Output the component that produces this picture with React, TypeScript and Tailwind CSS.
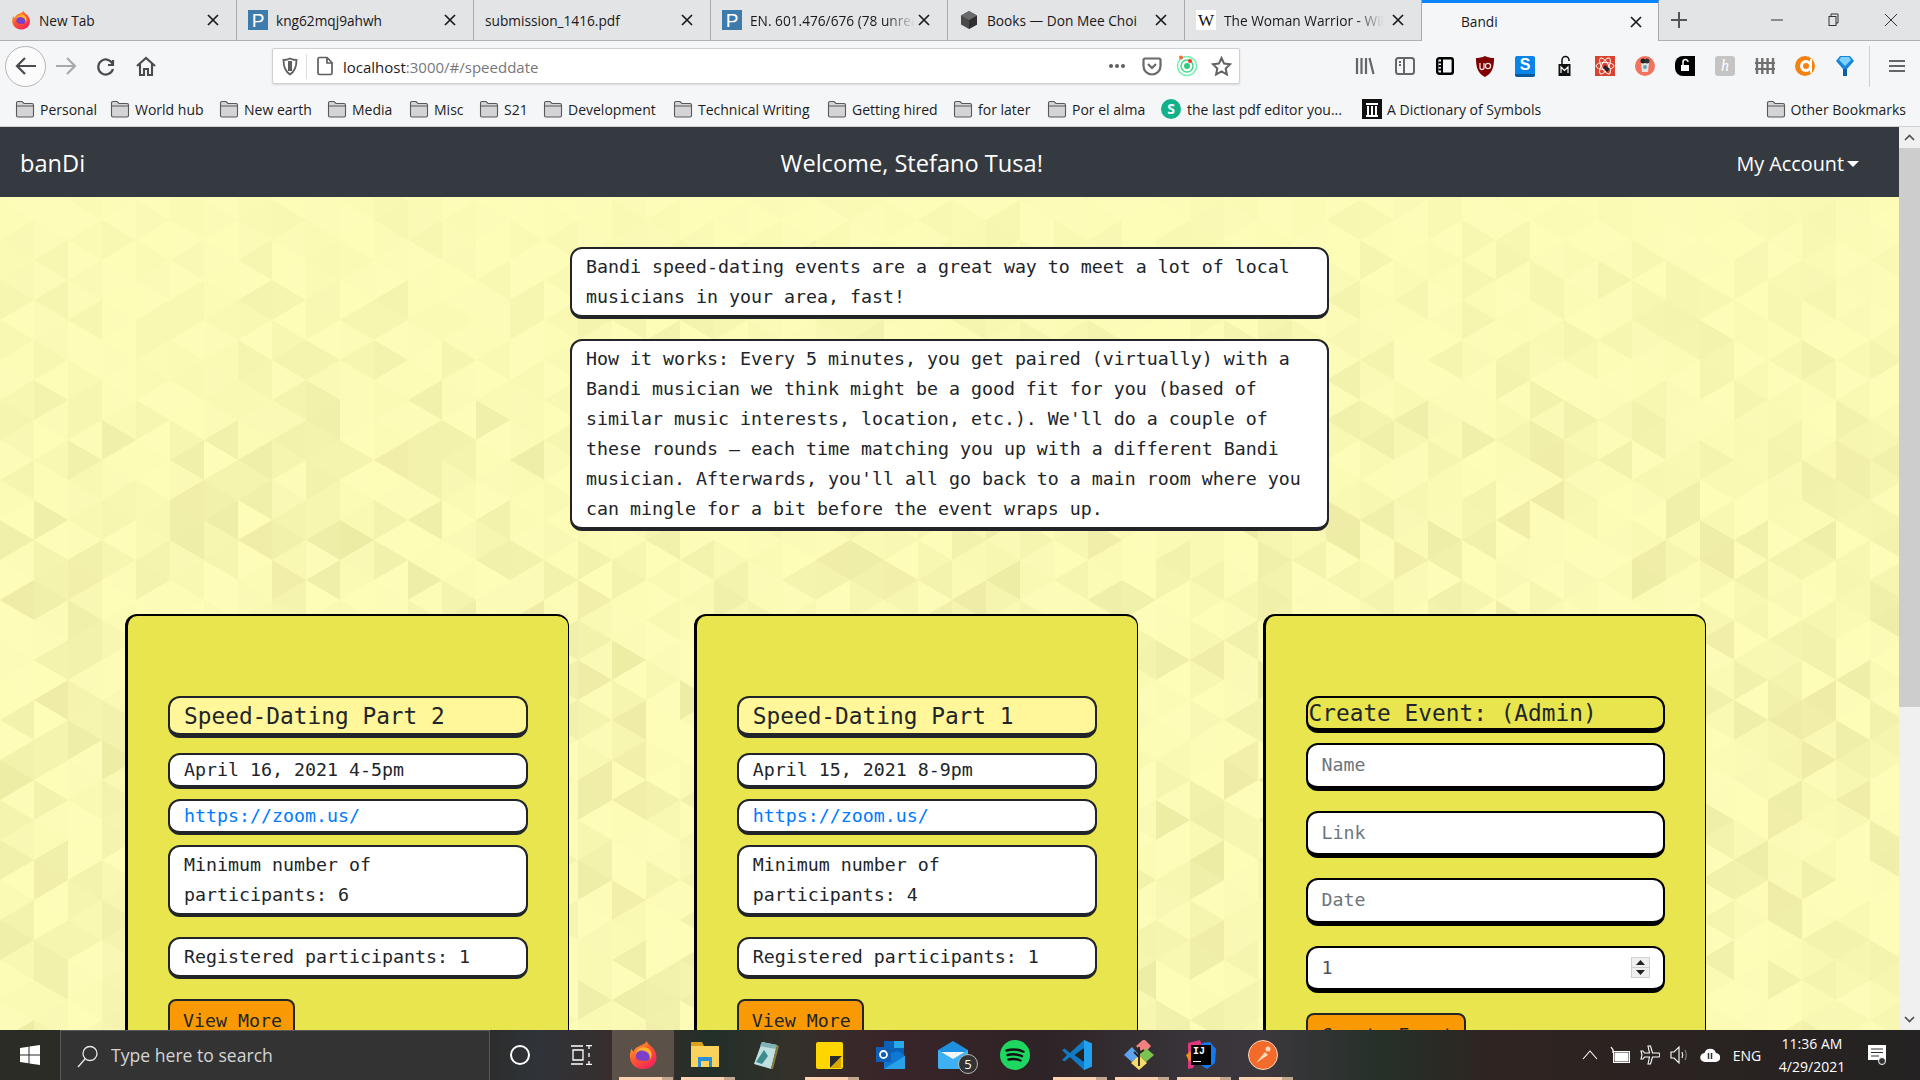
import React from "react";

const ui = "font-['Open_Sans',sans-serif]";
const mono = "font-['DejaVu_Sans_Mono',monospace]";

function CloseX({ className = "text-[#1b1b1b]" }: { className?: string }) {
  return (
    <svg width="14" height="14" viewBox="0 0 14 14" className={className}>
      <path d="M2 2l10 10M12 2L2 12" stroke="currentColor" strokeWidth="1.7" fill="none" />
    </svg>
  );
}

function FirefoxIcon({ size = 20 }: { size?: number }) {
  return (
    <svg width={size} height={size} viewBox="0 0 32 32">
      <defs>
        <linearGradient id="ffa" x1="0" y1="0" x2="0.7" y2="1">
          <stop offset="0" stopColor="#ffbd2e" />
          <stop offset="0.5" stopColor="#ff5a2c" />
          <stop offset="1" stopColor="#f5245f" />
        </linearGradient>
      </defs>
      <path d="M20 1c1 4 5 5 7 8 3 4 4 8 3 12-1 6-7 10-14 10C8 31 2 25 2 17c0-3 1-6 2-8 0 2 1 3 2 3 1-3 4-5 7-6 3-1 6-3 7-5z" fill="url(#ffa)" />
      <circle cx="16" cy="17" r="7.5" fill="#7b3fc9" />
      <path d="M8 15c2-3 6-5 10-3 4 1 6 5 5 9 3-3 3-8 0-11-3-3-8-3-11-1-2 1-3 3-4 6z" fill="#ffb02e" />
      <path d="M9 20c2 4 7 6 11 4 2-1 3-2 4-4-2 2-5 3-8 2-3 0-5-1-7-2z" fill="#ff4a2e" />
    </svg>
  );
}

function PiazzaIcon() {
  return (
    <div className="w-[20px] h-[20px] bg-[#3e7bad] flex items-center justify-center text-white text-[19px] leading-none font-['Liberation_Sans',sans-serif]">
      P
    </div>
  );
}

function BoxIcon() {
  return (
    <svg width="20" height="20" viewBox="0 0 20 20">
      <path d="M10 1l8 4.5v9L10 19l-8-4.5v-9z" fill="#4a4a4a" />
      <path d="M10 10l8-4.5v9L10 19z" fill="#2f2f2f" />
      <path d="M10 1l8 4.5L10 10 2 5.5z" fill="#6a6a6a" />
    </svg>
  );
}

function WikiIcon() {
  return (
    <div className="w-[20px] h-[20px] bg-white flex items-center justify-center text-[#111] text-[17px] leading-none font-['Liberation_Serif',serif]">
      W
    </div>
  );
}

function Folder() {
  return (
    <svg width="20" height="18" viewBox="0 0 20 18" className="shrink-0">
      <path d="M1.5 15.5V3a1.5 1.5 0 0 1 1.5-1.5h4l2 2h8A1.5 1.5 0 0 1 18.5 5v10.5A1.5 1.5 0 0 1 17 17H3a1.5 1.5 0 0 1-1.5-1.5z" fill="#d4d4d6" stroke="#58585a" strokeWidth="1.1" />
      <path d="M1.5 6h17" stroke="#58585a" strokeWidth="1" />
    </svg>
  );
}

const tabs = [
  { title: "New Tab", icon: <FirefoxIcon />, fade: "" },
  { title: "kng62mqj9ahwh", icon: <PiazzaIcon />, fade: "" },
  { title: "submission_1416.pdf", icon: null, fade: "" },
  { title: "EN. 601.476/676 (78 unread)", icon: <PiazzaIcon />, fade: "[mask-image:linear-gradient(90deg,#000_82%,transparent)]" },
  { title: "Books — Don Mee Choi", icon: <BoxIcon />, fade: "" },
  { title: "The Woman Warrior - Wikipedia", icon: <WikiIcon />, fade: "[mask-image:linear-gradient(90deg,#000_80%,transparent_97%)]" },
];

function TabStrip() {
  return (
    <div className={`flex h-[41px] bg-[#e3e4e6] border-b border-[#b1b1b3] text-[13.7px] text-[#18181a] ${ui}`}>
      {tabs.map((t) => (
        <div key={t.title} className="w-[237px] h-[40px] flex items-center pl-[11px] pr-[16px] border-r border-[#a9a9ab]">
          {t.icon && <div className="w-[20px] mr-[8px] shrink-0">{t.icon}</div>}
          <div className={`flex-1 min-w-0 pt-[2px] overflow-hidden whitespace-nowrap ${t.fade}`}>
            {t.title}
          </div>
          <div className="ml-auto pl-[2px]">
            <CloseX />
          </div>
        </div>
      ))}
      <div className="w-[237px] h-[41px] flex items-center pl-[39px] pr-[15px] bg-[#f5f6f7] border-t-[3px] border-[#0a84ff] border-r border-r-[#a9a9ab]">
        <div className="flex-1">Bandi</div>
        <CloseX />
      </div>
      <div className="w-[40px] flex items-center justify-center">
        <svg width="18" height="18" viewBox="0 0 18 18">
          <path d="M9 1v16M1 9h16" stroke="#555" strokeWidth="2" />
        </svg>
      </div>
      <div className="flex-1" />
      <div className="w-[56px] flex items-center justify-center">
        <svg width="12" height="12" viewBox="0 0 12 12"><path d="M0 6h12" stroke="#333" /></svg>
      </div>
      <div className="w-[58px] flex items-center justify-center">
        <svg width="12" height="14" viewBox="0 0 12 14" fill="none" stroke="#333"><path d="M3 3V1h7v9H8" /><rect x="1" y="3.5" width="7" height="9" /></svg>
      </div>
      <div className="w-[56px] flex items-center justify-center mr-[1px]">
        <svg width="14" height="14" viewBox="0 0 14 14"><path d="M1 1l12 12M13 1L1 13" stroke="#333" strokeWidth="1" /></svg>
      </div>
    </div>
  );
}

function NavBtn({ children }: { children: React.ReactNode }) {
  return <div className="w-[40px] h-[40px] flex items-center justify-center">{children}</div>;
}

function ExtSlot({ children }: { children: React.ReactNode }) {
  return <div className="w-[40px] flex items-center justify-center">{children}</div>;
}

function NavRow() {
  return (
    <div className={`flex items-center h-[50px] bg-[#f5f6f7] ${ui}`}>
      <div className="ml-[5px] w-[41px] h-[41px] rounded-full border border-[#b5b5b7] bg-[#fbfbfc] flex items-center justify-center">
        <svg width="22" height="20" viewBox="0 0 22 20" fill="none" stroke="#4a4a4f" strokeWidth="2.2">
          <path d="M21 10H3M10 2l-8 8 8 8" />
        </svg>
      </div>
      <NavBtn>
        <svg width="22" height="20" viewBox="0 0 22 20" fill="none" stroke="#a9a9ab" strokeWidth="2.2">
          <path d="M1 10h18M12 2l8 8-8 8" />
        </svg>
      </NavBtn>
      <NavBtn>
        <svg width="20" height="20" viewBox="0 0 20 20" fill="none" stroke="#4a4a4f" strokeWidth="2.2">
          <path d="M17 4v5h-5M17 9a7.5 7.5 0 1 0 0 4" />
        </svg>
      </NavBtn>
      <NavBtn>
        <svg width="22" height="22" viewBox="0 0 22 22" fill="none" stroke="#4a4a4f" strokeWidth="2.1">
          <path d="M2 11l9-8 9 8M5 9v11h4v-6h4v6h4V9" />
        </svg>
      </NavBtn>
      <div className="ml-[106px] w-[968px] h-[36px] bg-white rounded-[2px] border border-[#d0d0d2] shadow-[0_1px_2px_rgba(0,0,0,0.12)] flex items-center">
        <div className="w-[34px] h-[25px] flex items-center justify-center border-r border-[#dcdcde]">
          <svg width="16" height="19" viewBox="0 0 16 19" fill="none" stroke="#5f5f62" strokeWidth="1.8">
            <path d="M8 1.5c2 1 4 1.5 6.5 1.5 0 6-1 11-6.500 14.500C2.500 14 1.500 9 1.500 3 4 3 6 2.500 8 1.500z" />
            <path d="M8 4v10" strokeWidth="4" />
          </svg>
        </div>
        <div className="w-[36px] flex items-center justify-center">
          <svg width="18" height="20" viewBox="0 0 18 20" fill="none" stroke="#5f5f62" strokeWidth="1.700">
            <path d="M3 1.500h8l5 5V17a1.500 1.500 0 0 1-1.500 1.500h-11A1.500 1.500 0 0 1 2 17V3a1.500 1.500 0 0 1 1-1.500zM11 1.500V7h5" />
          </svg>
        </div>
        <div className="pt-[2px] text-[15px] text-[#1c1c1e] whitespace-nowrap">
          localhost<span className="text-[#77777a]">:3000/#/speeddate</span>
        </div>
        <div className="flex-1" />
        <div className="w-[35px] flex items-center justify-center gap-[2px]">
          <div className="w-[4px] h-[4px] rounded-full bg-[#5f5f62]" />
          <div className="w-[4px] h-[4px] rounded-full bg-[#5f5f62]" />
          <div className="w-[4px] h-[4px] rounded-full bg-[#5f5f62]" />
        </div>
        <div className="w-[35px] flex justify-center">
          <svg width="20" height="19" viewBox="0 0 20 19" fill="none" stroke="#69696c" strokeWidth="2.200">
            <path d="M3 1.500h14A1.500 1.500 0 0 1 18.500 3v6a8.500 8.500 0 0 1-17 0V3A1.500 1.500 0 0 1 3 1.500zM6 7l4 4 4-4" />
          </svg>
        </div>
        <div className="w-[35px] flex justify-center">
          <svg width="22" height="22" viewBox="0 0 22 22" fill="none">
            <circle cx="11" cy="11" r="9.500" stroke="#6ff0b0" strokeWidth="1.500" />
            <circle cx="11" cy="11" r="6" stroke="#45d88a" strokeWidth="1.500" />
            <circle cx="11" cy="11" r="3" fill="#36c77c" />
            <circle cx="5" cy="2.500" r="2" fill="#f26a2e" />
            <circle cx="14" cy="6" r="2" fill="#ee3d24" />
          </svg>
        </div>
        <div className="w-[35px] flex justify-center">
          <svg width="21" height="20" viewBox="0 0 21 20" fill="none" stroke="#626265" strokeWidth="2">
            <path d="M10.500 2l2.600 5.600 6 .7-4.400 4.200 1.200 6-5.400-3-5.400 3 1.200-6L1.900 8.300l6-.7z" />
          </svg>
        </div>
      </div>
      <div className="ml-[105px] flex items-center h-full">
        <ExtSlot>
          <svg width="20" height="18" viewBox="0 0 20 18" stroke="#66666a" strokeWidth="2.200" fill="none">
            <path d="M2 1v16M6.500 1v16M11 1v16M14.500 1l4 16" />
          </svg>
        </ExtSlot>
        <ExtSlot>
          <svg width="20" height="18" viewBox="0 0 20 18" stroke="#66666a" strokeWidth="2" fill="none">
            <rect x="1" y="1" width="18" height="16" rx="2.500" />
            <path d="M9 1v16M4 5h2M4 8h2" />
          </svg>
        </ExtSlot>
        <ExtSlot>
          <svg width="18" height="18" viewBox="0 0 18 18" stroke="#000" strokeWidth="2.400" fill="none">
            <rect x="1.200" y="1.200" width="15.600" height="15.600" rx="2" />
            <path d="M6 1v16M2.500 5.500H6M2.500 9H6M2.500 12.500H6" strokeWidth="2" />
          </svg>
        </ExtSlot>
        <ExtSlot>
          <div className="relative w-[18px] h-[21px]">
            <svg width="18" height="21" viewBox="0 0 18 21" className="absolute inset-0">
              <path d="M9 0c3 1.500 6 2 9 2 0 8-1 15-9 19C1 17 0 10 0 2c3 0 6-.5 9-2z" fill="#800000" />
              <path d="M4 7v4.500a2 2 0 0 0 4 0V7" stroke="#e8dcdc" strokeWidth="1.300" fill="none" />
              <circle cx="12" cy="10" r="2.600" stroke="#e8dcdc" strokeWidth="1.300" fill="none" />
            </svg>
          </div>
        </ExtSlot>
        <ExtSlot>
          <div className="w-[20px] h-[21px] bg-[#0b84e8] border-b-[3px] border-[#0a5aa0] rounded-[2px] flex items-center justify-center text-white text-[16px] leading-none font-bold font-['Liberation_Sans',sans-serif]">
            S
          </div>
        </ExtSlot>
        <ExtSlot>
          <svg width="14" height="22" viewBox="0 0 14 22">
            <path d="M4 10V5a3.500 3.500 0 0 1 7 0v1" stroke="#111" strokeWidth="1.500" fill="none" />
            <rect x="0.500" y="9" width="12" height="12" fill="#111" />
            <path d="M3 18v-6l3.500 3.500L10 12v6" stroke="#fff" strokeWidth="1.200" fill="none" />
          </svg>
        </ExtSlot>
        <ExtSlot>
          <svg width="20" height="20" viewBox="0 0 20 20">
            <rect width="20" height="20" fill="#d9432f" />
            <g fill="none" stroke="#fff" strokeWidth="0.900">
              <ellipse cx="10" cy="10" rx="9" ry="3.500" />
              <ellipse cx="10" cy="10" rx="9" ry="3.500" transform="rotate(60 10 10)" />
              <ellipse cx="10" cy="10" rx="9" ry="3.500" transform="rotate(120 10 10)" />
            </g>
            <path d="M10 9l5 4-3 3-4-4z" fill="#222" />
          </svg>
        </ExtSlot>
        <ExtSlot>
          <svg width="20" height="20" viewBox="0 0 20 20">
            <circle cx="10" cy="10" r="10" fill="#f4735e" />
            <path d="M6 7h8l-1 9H7z" fill="#e4e4e4" />
            <circle cx="8" cy="5" r="2.500" fill="#222" />
            <circle cx="12" cy="5" r="2.500" fill="#333" />
            <circle cx="10" cy="11" r="2" fill="#6aa2b8" />
          </svg>
        </ExtSlot>
        <ExtSlot>
          <svg width="20" height="20" viewBox="0 0 20 20">
            <path d="M8 0h12v20H8a8 8 0 0 1-8-8V8a8 8 0 0 1 8-8z" fill="#000" />
            <rect x="6" y="9" width="8" height="6" fill="#fff" />
            <path d="M8 9V6a2.500 2.500 0 0 1 5 0" stroke="#fff" strokeWidth="1.500" fill="none" />
          </svg>
        </ExtSlot>
        <ExtSlot>
          <div className="w-[20px] h-[20px] rounded-[3px] bg-[#c4c4c4] flex items-center justify-center text-white text-[16px] leading-none italic font-['Liberation_Serif',serif]">
            h
          </div>
        </ExtSlot>
        <ExtSlot>
          <svg width="20" height="18" viewBox="0 0 20 18" stroke="#707070" fill="none">
            <path d="M2 1v16M7.300 1v16M12.600 1v16M18 1v16" strokeWidth="2.400" />
            <path d="M0 6h20M0 12h20" strokeWidth="2" />
          </svg>
        </ExtSlot>
        <ExtSlot>
          <svg width="20" height="20" viewBox="0 0 20 20">
            <circle cx="10" cy="10" r="10" fill="#f5820f" />
            <circle cx="11" cy="10" r="6" fill="#fff" />
            <circle cx="11" cy="10" r="3" fill="#f5820f" />
            <rect x="15" y="3" width="2" height="14" fill="#fff" />
          </svg>
        </ExtSlot>
        <ExtSlot>
          <svg width="18" height="20" viewBox="0 0 18 20">
            <path d="M4 0h10l4 5-7 8v7H7v-7L0 5z" fill="#1786d8" />
            <path d="M5 1h8l2 3-6 6-6-6z" fill="#7dd0ff" />
            <path d="M7 13h4v7H7z" fill="#0b5ea8" />
          </svg>
        </ExtSlot>
        <div className="ml-[4px] w-px h-[41px] bg-[#d0d0d2]" />
        <div className="ml-[19px]">
          <svg width="16" height="14" viewBox="0 0 16 14" stroke="#666669" strokeWidth="2.200">
            <path d="M0 2h16M0 7h16M0 12h16" />
          </svg>
        </div>
      </div>
    </div>
  );
}

const bookmarks = [
  { label: "Personal", cls: "w-[95px]" },
  { label: "World hub", cls: "w-[109px]" },
  { label: "New earth", cls: "w-[108px]" },
  { label: "Media", cls: "w-[82px]" },
  { label: "Misc", cls: "w-[70px]" },
  { label: "S21", cls: "w-[64px]" },
  { label: "Development", cls: "w-[130px]" },
  { label: "Technical Writing", cls: "w-[154px]" },
  { label: "Getting hired", cls: "w-[126px]" },
  { label: "for later", cls: "w-[94px]" },
  { label: "Por el alma", cls: "w-[114px]" },
];

function Bookmarks() {
  return (
    <div className={`flex items-center h-[36px] pl-[15px] bg-[#f5f6f7] border-b border-[#d0d0d2] text-[14px] text-[#1c1c1e] whitespace-nowrap ${ui}`}>
      {bookmarks.map((b) => (
        <div key={b.label} className={`flex items-center gap-[5px] ${b.cls}`}>
          <Folder />
          <span className="pt-[2px]">{b.label}</span>
        </div>
      ))}
      <div className="flex items-center gap-[6px] w-[201px]">
        <div className="w-[20px] h-[20px] rounded-full bg-[#10b28a] flex items-center justify-center text-white text-[14px] font-bold leading-none">S</div>
        <span className="pt-[2px]">the last pdf editor you...</span>
      </div>
      <div className="flex items-center gap-[5px]">
        <svg width="20" height="20" viewBox="0 0 20 20">
          <rect width="20" height="20" fill="#111" />
          <path d="M4 4h12v2H4zM5 7h2v9H5zM9 7h2v9H9zM13 7h2v9h-2zM4 16h12v2H4z" fill="#fff" />
        </svg>
        <span className="pt-[2px]">A Dictionary of Symbols</span>
      </div>
      <div className="flex-1" />
      <div className="flex items-center gap-[5px] pr-[14px]">
        <Folder />
        <span className="pt-[2px]">Other Bookmarks</span>
      </div>
    </div>
  );
}

function seed(i: number, j: number, k: number) {
  const x = Math.sin(i * 127.1 + j * 311.7 + k * 74.7) * 43758.5453;
  return x - Math.floor(x);
}

function TriangleBackground() {
  const polys: React.ReactNode[] = [];
  for (let i = 0; i < 57; i++) {
    for (let j = -1; j < 22; j++) {
      const x0 = i * 34;
      const x1 = x0 + 34;
      const yl = j * 40 + (i % 2 ? 23 : 3);
      const yr = j * 40 + (i % 2 ? 3 : 23);
      const density = 0.3 + 0.7 * Math.min(1, (yl + 20) / 320);
      const a = Math.pow(seed(i, j, 1), 2) * 0.18 * density;
      const b = Math.pow(seed(i, j, 2), 2) * 0.18 * density;
      polys.push(
        <polygon key={`a${i}-${j}`} points={`${x0},${yl} ${x0},${yl + 40} ${x1},${yl + 20}`} fill="#a89f50" fillOpacity={a} />,
        <polygon key={`b${i}-${j}`} points={`${x1},${yr} ${x1},${yr + 40} ${x0},${yr + 20}`} fill="#a89f50" fillOpacity={b} />
      );
    }
  }
  return (
    <svg className="absolute inset-0 w-full h-full" aria-hidden="true">
      {polys}
    </svg>
  );
}

const itemBox = "bg-white border-2 border-b-4 border-[#212529] rounded-[12px] px-[14px]";

function EventCard({ title, date, min }: { title: string; date: string; min: number }) {
  return (
    <div className="w-[444px] h-[600px] shrink-0 bg-[#e8e54e] border-t-2 border-l-[3px] border-r border-black rounded-t-[12px] pl-[40px] pr-[40px] pt-[80px]">
      <div className="w-[360px] flex flex-col">
        <div className="h-[42px] bg-[#fff799] border-2 border-b-[5px] border-[#212529] rounded-[12px] px-[14px] text-[22.8px] leading-[37px] text-[#212529]">
          {title}
        </div>
        <div className={`mt-[15px] h-[36px] ${itemBox}`}>{date}</div>
        <div className={`mt-[10px] h-[36px] text-[#007bff] ${itemBox}`}>https://zoom.us/</div>
        <div className={`mt-[10px] py-[3px] ${itemBox}`}>Minimum number of participants: {min}</div>
        <div className={`mt-[20px] py-[3px] ${itemBox}`}>Registered participants: 1</div>
        <div className="mt-[20px] w-[127px] h-[44px] bg-[#f99a05] border-2 border-[#212529] rounded-[8px] pl-[13px] leading-[40px] text-[#212529] whitespace-nowrap">
          View More
        </div>
      </div>
    </div>
  );
}

const inputBox = "h-[47.5px] mb-[20px] bg-white border-2 border-b-[5px] border-black rounded-[12px] flex items-center pl-[14px] pr-[13px]";

function CreateCard() {
  return (
    <div className="w-[443px] h-[600px] shrink-0 bg-[#e8e54e] border-t-2 border-l-[3px] border-r border-black rounded-t-[12px] pl-[40px] pr-[40px] pt-[80px]">
      <div className="w-[359px] flex flex-col">
        <div className="h-[37px] mb-[10px] border-2 border-b-[5px] border-black rounded-[12px] pl-[1px] text-[22.8px] leading-[30px] text-[#212529]">
          Create Event: (Admin)
        </div>
        {["Name", "Link", "Date"].map((p) => (
          <div key={p} className={inputBox}>
            <input placeholder={p} className="flex-1 min-w-0 bg-transparent outline-none placeholder:text-[#6c757d]" />
          </div>
        ))}
        <div className={inputBox}>
          <div className="flex-1 text-[#495057]">1</div>
          <div className="w-[19px] h-[21px] flex flex-col gap-px border border-[#cfcfcf] bg-[#cfcfcf]">
            <div className="flex-1 bg-[#efefef] flex items-center justify-center">
              <svg width="9" height="5" viewBox="0 0 9 5"><path d="M4.500 0l4.500 5H0z" fill="#222" /></svg>
            </div>
            <div className="flex-1 bg-[#efefef] flex items-center justify-center">
              <svg width="9" height="5" viewBox="0 0 9 5"><path d="M4.500 5L0 0h9z" fill="#222" /></svg>
            </div>
          </div>
        </div>
        <div className="w-[160px] h-[44px] bg-[#f99a05] border-2 border-[#212529] rounded-[8px] px-[14px] leading-[40px] text-[#212529] whitespace-nowrap">
          Create Event
        </div>
      </div>
    </div>
  );
}

function Page() {
  return (
    <div className="flex-1 min-w-0 flex flex-col overflow-hidden">
      <div className={`h-[70px] shrink-0 bg-[#343a40] flex items-center pt-[4px] pl-[20px] pr-[40px] text-white ${ui}`}>
        <div className="text-[23.6px] w-[370px]">banDi</div>
        <div className="flex-1 text-center text-[23.6px] mr-[303px]">Welcome, Stefano Tusa!</div>
        <div className="flex items-center gap-[3px] text-[19.8px]">
          My Account
          <div className="w-0 h-0 border-x-[6px] border-x-transparent border-t-[6px] border-t-white" />
        </div>
      </div>
      <div className={`relative flex-1 overflow-hidden bg-[#fdfdb9] text-[18.27px] leading-[30px] text-[#212529] ${mono}`}>
        <TriangleBackground />
        <div className="relative pt-[50px]">
          <div className="w-[759px] mx-auto flex flex-col gap-[20px]">
            <div className={`py-[3px] ${itemBox}`}>
              Bandi speed-dating events are a great way to meet a lot of local musicians in your area, fast!
            </div>
            <div className={`py-[3px] ${itemBox}`}>
              How it works: Every 5 minutes, you get paired (virtually) with a Bandi musician we think might be a good fit for you (based of similar music interests, location, etc.). We'll do a couple of these rounds — each time matching you up with a different Bandi musician. Afterwards, you'll all go back to a main room where you can mingle for a bit before the event wraps up.
            </div>
          </div>
          <div className="flex gap-[124.75px] pl-[125px] mt-[83px]">
            <EventCard title="Speed-Dating Part 2" date="April 16, 2021 4-5pm" min={6} />
            <EventCard title="Speed-Dating Part 1" date="April 15, 2021 8-9pm" min={4} />
            <CreateCard />
          </div>
        </div>
      </div>
    </div>
  );
}

function Scrollbar() {
  return (
    <div className="w-[21px] bg-[#f0f0f0] flex flex-col">
      <div className="h-[21px] flex items-center justify-center">
        <svg width="11" height="7" viewBox="0 0 11 7" fill="none" stroke="#505050" strokeWidth="1.700"><path d="M1 6l4.500-4.500L10 6" /></svg>
      </div>
      <div className="h-[559px] bg-[#cdcdcd]" />
      <div className="flex-1" />
      <div className="h-[21px] flex items-center justify-center">
        <svg width="11" height="7" viewBox="0 0 11 7" fill="none" stroke="#505050" strokeWidth="1.700"><path d="M1 1l4.500 4.500L10 1" /></svg>
      </div>
    </div>
  );
}

function TaskIcon({ children, line = false, active = false }: { children: React.ReactNode; line?: boolean; active?: boolean }) {
  return (
    <div className={`relative w-[62px] h-[50px] flex items-center justify-center ${active ? "bg-[#5c5148]" : ""}`}>
      {children}
      {line && (
        <div className="absolute bottom-0 left-[7px] right-[1px] h-[3px] flex">
          <div className="flex-1 bg-[#fdd2b2]" />
          <div className="w-[11px] bg-[#c4a78f]" />
        </div>
      )}
    </div>
  );
}

function TrayIcon({ children }: { children: React.ReactNode }) {
  return <div className="w-[30px] flex items-center justify-center">{children}</div>;
}

function Taskbar() {
  return (
    <div className={`flex h-[50px] shrink-0 text-white bg-[linear-gradient(90deg,#2b2c26_0%,#2b2c28_25%,#2f333a_28%,#3a2c28_33%,#222f29_37%,#33312a_41%,#3a2529_46%,#2e2326_54%,#383439_62%,#3b373c_66%,#253029_72%,#2f2421_78%,#242222_100%)] ${ui}`}>
      <div className="w-[60px] flex items-center justify-center">
        <svg width="20" height="20" viewBox="0 0 20 20" fill="#fff">
          <path d="M0 3l8.500-1.200v7.700H0zM9.500 1.600L20 0v9.500H9.500zM0 10.500h8.500v7.700L0 17zM9.500 10.500H20V20L9.500 18.400z" />
        </svg>
      </div>
      <div className="w-[430px] bg-[#333333] border-t border-x border-[#5a5a5a] flex items-center pl-[15px]">
        <svg width="24" height="24" viewBox="0 0 24 24" fill="none" stroke="#e8e8e8" strokeWidth="1.300">
          <circle cx="14" cy="9.500" r="7" />
          <path d="M9 15L2 23" />
        </svg>
        <span className="ml-[11px] text-[17.6px] text-[#d4d4d4]">Type here to search</span>
      </div>
      <div className="w-[60px] flex items-center justify-center">
        <div className="w-[20px] h-[20px] rounded-full border-[2.500px] border-white" />
      </div>
      <div className="w-[62px] flex items-center justify-center">
        <svg width="21" height="20" viewBox="0 0 21 20" fill="none" stroke="#fff" strokeWidth="1.300">
          <path d="M0 1h12M0 19h12M2 5h10v10H2zM18 0v4M18 8v4M18 16v4M15 .7h6M15 19.300h6" />
        </svg>
      </div>
      <TaskIcon line active>
        <FirefoxIcon size={30} />
      </TaskIcon>
      <TaskIcon line>
        <svg width="30" height="28" viewBox="0 0 30 28">
          <path d="M1 1h11l2 4H1z" fill="#dba21f" />
          <path d="M1 5h28v21H1z" fill="#fbd35c" />
          <path d="M8 16h14v10h-3v-6h-8v6H8z" fill="#2a8fd6" />
        </svg>
      </TaskIcon>
      <TaskIcon>
        <svg width="28" height="30" viewBox="0 0 28 30">
          <path d="M9 2l15 3-6 24L1 24z" fill="#bfe0de" />
          <path d="M9 2l15 3-1 4L7 6z" fill="#7fb4b4" />
          <path d="M3 22l8-12 4 6-6 8z" fill="#3d8b8e" />
          <path d="M24 5l2 1-6 23-2 0z" fill="#8a7a3a" />
        </svg>
      </TaskIcon>
      <TaskIcon line>
        <svg width="27" height="27" viewBox="0 0 27 27">
          <rect width="27" height="27" rx="2" fill="#ffd600" />
          <path d="M14 26V14h12z" fill="#2b2b2b" transform="rotate(0)" />
          <path d="M15 26l10-11v11z" fill="#d6a800" />
        </svg>
      </TaskIcon>
      <TaskIcon>
        <svg width="30" height="28" viewBox="0 0 30 28">
          <path d="M8 0h20v14H8z" fill="#0a62b8" />
          <path d="M18 0h10v7H18z" fill="#29a8ea" />
          <path d="M8 14l14-4 7 5v13H8z" fill="#0f78d4" />
          <path d="M8 28l21-13v13z" fill="#2aa0e8" />
          <rect y="6" width="15" height="15" fill="#0e5fb5" />
          <circle cx="7.500" cy="13.500" r="3.500" fill="none" stroke="#fff" strokeWidth="1.800" />
        </svg>
      </TaskIcon>
      <TaskIcon>
        <div className="relative w-[30px] h-[28px]">
          <svg width="30" height="28" viewBox="0 0 30 28" className="absolute inset-0">
            <path d="M15 0l15 9v17a2 2 0 0 1-2 2H2a2 2 0 0 1-2-2V9z" fill="#1f8fe0" />
            <path d="M3 11h24v5l-12 7-12-7z" fill="#f2f6fa" />
            <path d="M0 9l15 9 15-9v17a2 2 0 0 1-2 2H2a2 2 0 0 1-2-2z" fill="#3fb0f3" />
          </svg>
          <div className="absolute left-[20px] top-[13px] w-[20px] h-[20px] rounded-full bg-[#333] border border-[#b8b8b8] flex items-center justify-center text-[13px] leading-none">
            5
          </div>
        </div>
      </TaskIcon>
      <TaskIcon>
        <svg width="30" height="30" viewBox="0 0 30 30" fill="none">
          <circle cx="15" cy="15" r="15" fill="#1ed760" />
          <path d="M6.500 10.500c6-1.700 12-1.200 17 1.300M7.500 15c5-1.300 10-.8 14.500 1.200M8.500 19.500c4.200-1 8.400-.6 12 1" stroke="#111" strokeWidth="2.400" strokeLinecap="round" />
        </svg>
      </TaskIcon>
      <TaskIcon line>
        <svg width="30" height="30" viewBox="0 0 30 30">
          <path d="M22 0l8 3.500v23L22 30 8 17l-5.500 4.500L0 20l5-5-5-5 2.500-1.500L8 13z" fill="#0f7ac6" />
          <path d="M22 8L12.500 15 22 22z" fill="#26201f" />
          <path d="M22 0l8 3.500v23L22 30z" fill="#24a1ec" />
        </svg>
      </TaskIcon>
      <TaskIcon line>
        <svg width="30" height="30" viewBox="0 0 30 30">
          <path d="M15 15L7 7l8-7 7 7z" fill="#f27f7f" transform="translate(5 -1)" />
          <path d="M0 15l8-8 7 8-7 7z" fill="#5da4f0" />
          <path d="M15 15l7-7 8 7-8 7z" fill="#7bc24f" />
          <path d="M7 23l8-8 8 8-8 7z" fill="#f8dc6b" />
          <path d="M15 7v19M15 13l5-3M10 12l5 5" stroke="#222" strokeWidth="1.800" fill="none" />
        </svg>
      </TaskIcon>
      <TaskIcon line>
        <div className="relative w-[30px] h-[30px]">
          <svg width="30" height="30" viewBox="0 0 30 30" className="absolute inset-0">
            <path d="M2 3l12-3 3 8-10 20-5 1z" fill="#e0367e" />
            <path d="M16 3l8-1 6 7-1 14-8 6-9-6z" fill="#1578ef" />
            <path d="M0 15l5-4 4 8-6 2z" fill="#f58a1f" />
          </svg>
          <div className="absolute left-[5px] top-[5px] w-[20px] h-[20px] bg-black" />
          <div className="absolute left-[7px] top-[5px] text-[10px] font-bold leading-[14px] font-['Liberation_Mono',monospace]">IJ</div>
          <div className="absolute left-[7px] top-[21px] w-[8px] h-[1px] bg-white" />
        </div>
      </TaskIcon>
      <TaskIcon line>
        <svg width="30" height="30" viewBox="0 0 30 30">
          <circle cx="15" cy="15" r="14.500" fill="#f26b2a" stroke="#f4d8c8" strokeWidth="1" />
          <path d="M8 23l9-11 3 3z" fill="#fbd6bf" />
          <circle cx="20" cy="9" r="2.500" fill="#fbd6bf" />
        </svg>
      </TaskIcon>
      <div className="flex-1" />
      <div className="flex items-stretch">
        <TrayIcon>
          <svg width="16" height="10" viewBox="0 0 16 10" fill="none" stroke="#fff" strokeWidth="1.100"><path d="M1 9l7-8 7 8" /></svg>
        </TrayIcon>
        <TrayIcon>
          <svg width="20" height="18" viewBox="0 0 20 18" fill="none" stroke="#fff"><rect x="3.500" y="5.500" width="16" height="11" /><rect x="5" y="7" width="13" height="8" fill="#fff" /><path d="M1 1l2 3v3" strokeWidth="1.300" /></svg>
        </TrayIcon>
        <TrayIcon>
          <svg width="20" height="20" viewBox="0 0 20 20" fill="none" stroke="#fff" strokeWidth="1.100"><path d="M8 1h2.500l2 7H19l1 2-1 2h-6.500l-2 7H8l1.500-7H4.500l-1.500 2H1l1-4-1-4h2l1.500 2h5z" /></svg>
        </TrayIcon>
        <TrayIcon>
          <svg width="20" height="20" viewBox="0 0 20 20" fill="none" stroke="#fff" strokeWidth="1.100"><path d="M1 7h3l5-5v16l-5-5H1zM12 7c1 2 1 4 0 6" /><path d="M15 5c1.500 3 1.500 7 0 10" stroke="#888" /></svg>
        </TrayIcon>
        <TrayIcon>
          <svg width="20" height="16" viewBox="0 0 20 16"><path d="M5 15a4.500 4.500 0 0 1-.5-9A6 6 0 0 1 16 6a4.500 4.500 0 0 1-.5 9z" fill="#fff" /><path d="M8.500 6v6M11.500 6v6" stroke="#333" strokeWidth="1.500" /></svg>
        </TrayIcon>
        <div className="w-[44px] flex items-center justify-center text-[14px]">ENG</div>
        <div className="w-[86px] flex flex-col items-center justify-center text-[14px] leading-[23px]">
          <div>11:36 AM</div>
          <div>4/29/2021</div>
        </div>
        <div className="w-[46px] flex items-center justify-center">
          <svg width="22" height="22" viewBox="0 0 22 22">
            <path d="M1 1h18v15H1z" fill="#fff" />
            <path d="M4 5h12M4 8.500h12M4 12h8" stroke="#333" strokeWidth="1.200" />
            <circle cx="15" cy="17" r="3.500" fill="#333" stroke="#fff" />
          </svg>
        </div>
        <div className="w-[19px]" />
      </div>
    </div>
  );
}

export default function App() {
  return (
    <div className="w-[1920px] h-[1080px] flex flex-col overflow-hidden">
      <TabStrip />
      <NavRow />
      <Bookmarks />
      <div className="flex-1 min-h-0 flex">
        <Page />
        <Scrollbar />
      </div>
      <Taskbar />
    </div>
  );
}
